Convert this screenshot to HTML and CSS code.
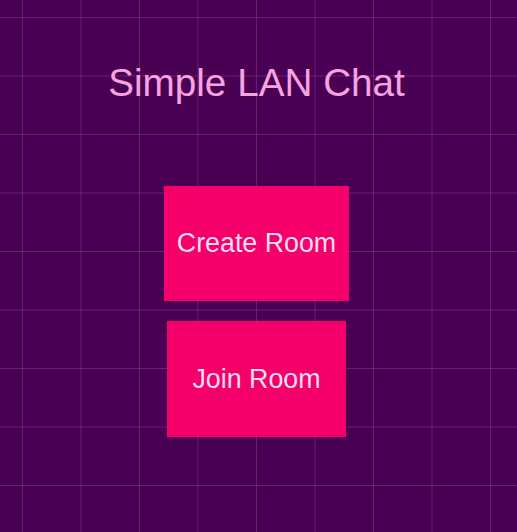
FILE: index.html
```html
<!DOCTYPE html>
<html lang="en">
<head>
<meta charset="utf-8">
<title>Simple LAN Chat</title>
<link rel="stylesheet" href="styles.css">
</head>
<body>
<main class="screen">
  <h1 class="title">Simple LAN Chat</h1>
  <div class="actions">
    <button class="btn btn-create">Create Room</button>
    <button class="btn btn-join">Join Room</button>
  </div>
</main>
</body>
</html>
```
FILE: styles.css
```css
html, body {
  margin: 0;
  padding: 0;
  height: 100%;
}
body {
  background-color: #4a0052;
  background-image:
    linear-gradient(to right, rgba(150, 80, 170, 0.4) 1px, transparent 1px),
    linear-gradient(to bottom, rgba(150, 80, 170, 0.4) 1px, transparent 1px);
  background-size: 58.5px 58.5px;
  background-position: 22px 17px;
  font-family: "Liberation Sans", Arial, sans-serif;
}
.screen {
  display: flex;
  flex-direction: column;
  align-items: center;
  padding-right: 4px;
  height: 100%;
  box-sizing: border-box;
}
.title {
  margin: 60px 0 0 0;
  font-size: 38.7px;
  line-height: 45px;
  font-weight: normal;
  color: #f6a4e0;
}
.actions {
  margin-top: 81px;
  display: flex;
  flex-direction: column;
  align-items: center;
  gap: 20px;
}
.btn {
  display: flex;
  align-items: center;
  justify-content: center;
  border: none;
  padding: 0;
  background: #f5006b;
  color: #fcdcef;
  font-family: "Liberation Sans", Arial, sans-serif;
  font-size: 26.8px;
}
.btn-create {
  width: 185px;
  height: 115px;
}
.btn-join {
  width: 179px;
  height: 116px;
}
```
